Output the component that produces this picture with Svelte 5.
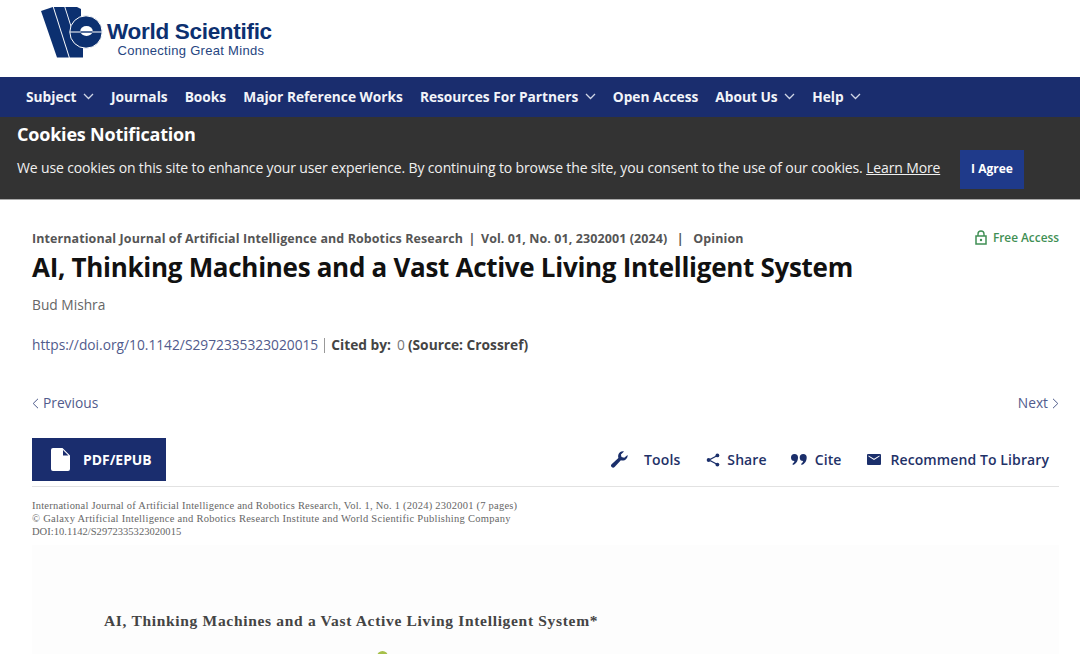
<script>
  const nav = [
    ['Subject', true], ['Journals', false], ['Books', false], ['Major Reference Works', false],
    ['Resources For Partners', true], ['Open Access', false], ['About Us', true], ['Help', true]
  ];
</script>

<div class="page">
  <header class="top">
    <svg class="mark" width="62" height="52" viewBox="0 0 62 52" aria-hidden="true">
      <path d="M0 4 L11.8 0 L27.8 50.5 H16 Z" fill="#0c3070"/>
      <path d="M12.8 0 H23.4 L30 21 V50.5 H28.8 Z" fill="#0c3070"/>
      <path d="M24.3 0 H36 L40 2 V14 H34 L31 21 Z" fill="#0c3070"/>
      <path d="M30 28 H42 V50.5 H30 Z" fill="#0c3070"/>
      <circle cx="45" cy="25" r="16.2" fill="#0c3070" stroke="#fff" stroke-width="1"/>
      <path d="M29 25 H62" stroke="#fff" stroke-width="1"/>
      <ellipse cx="45.5" cy="24" rx="6.2" ry="5" fill="#fff"/>
      <path d="M39.5 25 H51.5" stroke="#0c3070" stroke-width="1.4"/>
    </svg>
    <div class="wordmark">
      <span class="ws">World Scientific</span>
      <span class="cgm">Connecting Great Minds</span>
    </div>
  </header>

  <nav class="nav">
    {#each nav as [label, caret]}
      <span class="nav-item">
        {label}
        {#if caret}
          <svg width="11" height="7" viewBox="0 0 11 7" aria-hidden="true"><path d="M1 1 L5.5 5.5 L10 1" fill="none" stroke="#cfd5e6" stroke-width="1.3"/></svg>
        {/if}
      </span>
    {/each}
  </nav>

  <section class="cookie">
    <h2>Cookies Notification</h2>
    <div class="cookie-row">
      <p>We use cookies on this site to enhance your user experience. By continuing to browse the site, you consent to the use of our cookies. <u>Learn More</u></p>
      <span class="agree">I Agree</span>
    </div>
  </section>

  <main class="content">
    <div class="meta-row">
      <div class="meta">International Journal of Artificial Intelligence and Robotics Research<i>|</i>Vol. 01, No. 01, 2302001 (2024)<i class="wide">|</i>Opinion</div>
      <div class="free">
        <svg width="12" height="15" viewBox="0 0 12 15" aria-hidden="true"><rect x="1" y="6" width="10" height="8" fill="none" stroke="#3f8f54" stroke-width="1.5"/><path d="M3 6 V4 a3 3 0 0 1 6 0 V6" fill="none" stroke="#3f8f54" stroke-width="1.4"/><circle cx="6" cy="10" r="1.2" fill="#3f8f54"/></svg>
        Free Access
      </div>
    </div>
    <h1>AI, Thinking Machines and a Vast Active Living Intelligent System</h1>
    <div class="author">Bud Mishra</div>
    <div class="doi"><span class="link">https://doi.org/10.1142/S2972335323020015</span><span class="bar"></span><b>Cited by:</b><span class="zero">0</span><b>(Source: Crossref)</b></div>

    <div class="pager">
      <span><svg width="7" height="11" viewBox="0 0 7 11" aria-hidden="true"><path d="M6 .8 L1.2 5.5 L6 10.2" fill="none" stroke="#4d5a8a" stroke-width="1"/></svg>Previous</span>
      <span>Next<svg width="7" height="11" viewBox="0 0 7 11" aria-hidden="true"><path d="M1 .8 L5.8 5.5 L1 10.2" fill="none" stroke="#4d5a8a" stroke-width="1"/></svg></span>
    </div>

    <div class="tools-row">
      <div class="pdf">
        <svg width="19" height="23" viewBox="0 0 19 23" aria-hidden="true"><path d="M2 0 H11.5 L19 7.5 V21 a2 2 0 0 1-2 2 H2 a2 2 0 0 1-2-2 V2 A2 2 0 0 1 2 0Z M12 2 V7.5 H17.5Z" fill="#fff" fill-rule="evenodd"/></svg>
        PDF/EPUB
      </div>
      <div class="tools">
        <span class="tool t1">
          <svg width="17" height="17" viewBox="0 0 17 17" aria-hidden="true"><path d="M16.6 4 a5 5 0 0 1-6.7 5.2 L3.6 16 a2 2 0 0 1-3-2.8 L7.4 7 A5 5 0 0 1 13 .4 L9.9 3.4 L10.5 6 L13.2 6.8 Z" fill="#1b2f6b"/></svg>
          Tools
        </span>
        <span class="tool t2">
          <svg width="14" height="14" viewBox="0 0 14 14" aria-hidden="true"><path d="M11.5 2.5 L3 7 L11.5 11.5" fill="none" stroke="#1b2f6b" stroke-width="1.3"/><circle cx="11.4" cy="2.4" r="1.9" fill="#1b2f6b"/><circle cx="2.6" cy="7" r="1.9" fill="#1b2f6b"/><circle cx="11.4" cy="11.6" r="1.9" fill="#1b2f6b"/></svg>
          Share
        </span>
        <span class="tool t3">
          <svg width="16" height="11" viewBox="0 0 16 11" aria-hidden="true"><path d="M3.5 0 a3.5 3.5 0 0 1 3.5 3.5 C7 7 5 10 2 11 L1.4 10 C2.6 9 3.3 8 3.5 7 A3.5 3.5 0 0 1 3.5 0Z M12.2 0 a3.5 3.5 0 0 1 3.5 3.5 C15.7 7 13.7 10 10.7 11 L10.1 10 C11.3 9 12 8 12.2 7 A3.5 3.5 0 0 1 12.2 0Z" fill="#1b2f6b"/></svg>
          Cite
        </span>
        <span class="tool t4">
          <svg width="14" height="11" viewBox="0 0 14 11" aria-hidden="true"><path d="M1 0 H13 a1 1 0 0 1 1 1 V10 a1 1 0 0 1-1 1 H1 a1 1 0 0 1-1-1 V1 a1 1 0 0 1 1-1Z M1.5 2.4 L7 6 L12.5 2.4 V1.6 L7 4.8 L1.5 1.6Z" fill="#1b2f6b" fill-rule="evenodd"/></svg>
          Recommend To Library
        </span>
      </div>
    </div>

    <div class="paper">
      <div class="paper-head">
        <div class="line-1">International Journal of Artificial Intelligence and Robotics Research, Vol. 1, No. 1 (2024) 2302001 (7 pages)</div>
        <div>© Galaxy Artificial Intelligence and Robotics Research Institute and World Scientific Publishing Company</div>
        <div class="doi-line">DOI:10.1142/S2972335323020015</div>
      </div>
      <div class="paper-title">AI, Thinking Machines and a Vast Active Living Intelligent System*</div>
      <span class="dot"></span>
    </div>
  </main>
</div>

<style>
  :global(body) { margin: 0; background: #fff; }
  .page { width: 1080px; height: 654px; overflow: hidden; font-family: "Open Sans", sans-serif; color: #333; }

  .top { height: 77px; box-sizing: border-box; padding: 7px 0 0 41px; display: flex; align-items: flex-start; gap: 4px; }
  .mark { flex: none; }
  .wordmark { display: flex; flex-direction: column; align-items: center; padding-top: 13px; font-family: "Liberation Sans", sans-serif; color: #0c3070; }
  .ws { font-size: 22.5px; line-height: 24px; font-weight: 700; letter-spacing: -.3px; }
  .cgm { font-size: 13px; line-height: 14px; letter-spacing: .3px; color: #26457f; padding-left: 3px; }

  .nav { height: 40px; background: #1a2d6e; display: flex; align-items: center; padding: 0 0 2px 26px; gap: 17px; box-sizing: border-box; }
  .nav-item { display: inline-flex; align-items: center; gap: 6.5px; color: #f2f4f9; font-size: 13.72px; font-weight: 700; white-space: nowrap; }

  .cookie { height: 83px; background: #333; color: #fff; padding: 5px 0 0 17px; box-sizing: border-box; border-bottom: 1px solid #aaa; }
  .cookie h2 { margin: 0; font-size: 18px; line-height: 24px; font-weight: 700; letter-spacing: -.2px; }
  .cookie-row { display: flex; align-items: center; margin-top: 4px; }
  .cookie p { margin: 0; padding-bottom: 4px; font-size: 14px; line-height: 20px; width: 943px; flex: none; color: #f0f0f0; letter-spacing: -.143px; white-space: nowrap; }
  .agree { width: 64px; height: 39px; padding-bottom: 2px; box-sizing: border-box; background: #1f3a8a; color: #fff; font-size: 12px; font-weight: 700; display: flex; align-items: center; justify-content: center; }

  .content { padding: 28px 21px 0 32px; position: relative; }
  .meta-row { display: flex; justify-content: space-between; align-items: center; height: 20px; }
  .meta { font-size: 12.47px; font-weight: 700; color: #555; white-space: nowrap; letter-spacing: .1px; }
  .meta i { font-style: normal; margin: 0 5.5px; }
  .meta i.wide { margin: 0 9.5px; }
  .free { display: flex; align-items: center; gap: 6px; font-size: 11.85px; font-weight: 600; color: #3f8f54; transform: translateY(-1px); }
  h1 { margin: 1px 0 0; font-size: 26px; line-height: 36px; font-weight: 700; color: #111; white-space: nowrap; letter-spacing: -.295px; }
  .author { margin-top: 10px; font-size: 13.75px; line-height: 20px; color: #666; }
  .doi { margin-top: 20px; font-size: 13.75px; line-height: 20px; display: flex; align-items: center; color: #444; white-space: nowrap; }
  .link { color: #515b8c; }
  .bar { width: 1px; height: 15px; background: #999; margin: 0 6px; }
  .doi b { font-weight: 700; }
  .zero { margin: 0 3px 0 6px; color: #777; }

  .pager { margin-top: 38px; display: flex; justify-content: space-between; font-size: 13.75px; line-height: 20px; color: #515b8c; }
  .pager span { display: inline-flex; align-items: center; gap: 4px; }

  .tools-row { margin-top: 25px; height: 48px; display: flex; justify-content: space-between; align-items: stretch; border-bottom: 1px solid #e2e2e2; }
  .pdf { width: 134px; height: 43px; background: #1a2d6e; color: #fff; font-size: 13.9px; font-weight: 700; display: flex; align-items: center; gap: 13px; padding-left: 19px; box-sizing: border-box; }
  .tools { display: flex; align-items: center; padding: 0 10px 5px 0; color: #1f3268; font-size: 14px; font-weight: 600; }
  .tool { display: inline-flex; align-items: center; white-space: nowrap; letter-spacing: .1px; }
  .t1 { gap: 16px; margin-right: 26px; }
  .t2 { gap: 7px; margin-right: 24px; }
  .t3 { gap: 8px; margin-right: 26px; }
  .t4 { gap: 9px; }

  .paper { position: relative; margin-top: 12px; height: 200px; background: #fdfdfd; font-family: "Liberation Serif", serif; color: #666; }
  .paper-head { background: #fff; font-size: 10.5px; line-height: 13px; height: 46px; white-space: nowrap; letter-spacing: .28px; }
  .line-1 { letter-spacing: .23px; }
  .doi-line { letter-spacing: .04px; }
  .paper-title { margin: 0 0 0 72px; padding-top: 66px; font-size: 15.5px; line-height: 20px; font-weight: 700; color: #444; letter-spacing: .68px; white-space: nowrap; }
  .dot { position: absolute; left: 345px; top: 152px; width: 11px; height: 11px; border-radius: 50%; background: #a6c04a; }
</style>
